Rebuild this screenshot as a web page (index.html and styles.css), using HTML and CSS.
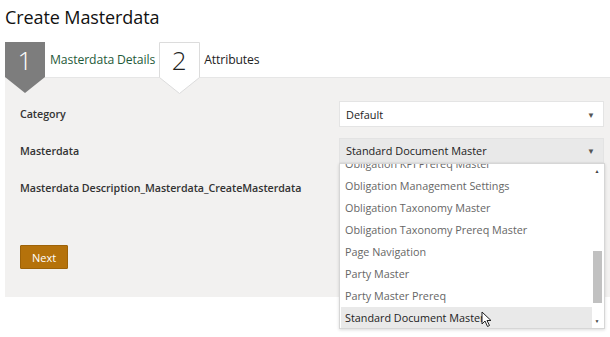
FILE: index.html
```html
<!DOCTYPE html>
<html>
<head>
<meta charset="utf-8">
<link rel="stylesheet" href="styles.css">
</head>
<body>
<div class="page">
  <h1 class="title">Create Masterdata</h1>
  <div class="steps">
    <div class="step">
      <div class="marker marker-active">
        <svg class="shape" width="40" height="51" viewBox="0 0 40 51"><polygon points="0,0 40,0 40,35 20,51 0,35" fill="#7d7d7d"/></svg>
        <span class="num">1</span>
      </div>
      <span class="step-label active">Masterdata Details</span>
    </div>
    <div class="step">
      <div class="marker">
        <svg class="shape" width="41" height="52" viewBox="0 0 41 52"><polygon points="0.5,0.5 40.5,0.5 40.5,35.5 20.5,51.5 0.5,35.5" fill="#ffffff" stroke="#dcdcdc"/></svg>
        <span class="num dark">2</span>
      </div>
      <span class="step-label">Attributes</span>
    </div>
  </div>
  <div class="panel">
    <div class="form">
      <label class="lbl">Category</label>
      <div class="select"><span>Default</span><span class="arrow">&#9660;</span></div>
      <label class="lbl">Masterdata</label>
      <div class="select-wrap">
        <div class="select open"><span>Standard Document Master</span><span class="arrow">&#9660;</span></div>
        <div class="dropdown">
          <ul class="options">
            <li class="opt cut">Obligation KPI Prereq Master</li>
            <li class="opt">Obligation Management Settings</li>
            <li class="opt">Obligation Taxonomy Master</li>
            <li class="opt">Obligation Taxonomy Prereq Master</li>
            <li class="opt">Page Navigation</li>
            <li class="opt">Party Master</li>
            <li class="opt">Party Master Prereq</li>
            <li class="opt selected">Standard Document Master</li>
          </ul>
          <div class="scrollbar">
            <span class="sb-arrow">&#9650;</span>
            <div class="track"><div class="thumb"></div></div>
            <span class="sb-arrow">&#9660;</span>
          </div>
          <svg class="cursor" width="12" height="17" viewBox="0 0 12 17"><path d="M1,1 L1,13 L4,10 L6.5,15.5 L8.5,14.5 L6,9.5 L10,9.5 Z" fill="#fff" stroke="#222" stroke-width="1"/></svg>
        </div>
      </div>
      <label class="lbl">Masterdata Description_Masterdata_CreateMasterdata</label>
      <div></div>
    </div>
    <button class="btn">Next</button>
  </div>
</div>
</body>
</html>
```
FILE: styles.css
```css
* { box-sizing: border-box; }
html, body { margin: 0; padding: 0; background: #fff; }
body { font-family: "Open Sans", "Noto Sans", sans-serif; color: #222; width: 610px; height: 337px; overflow: hidden; }
.page { padding: 0 0 0 5px; }
.title { margin: 0; padding-top: 4px; height: 42px; font-size: 18px; font-weight: 400; color: #111; letter-spacing: -0.1px; line-height: 26px; }
.steps { display: flex; height: 35px; align-items: stretch; gap: 4px; }
.step { display: flex; align-items: center; }
.marker { position: relative; width: 40px; height: 35px; display: flex; align-items: center; justify-content: center; }
.marker .shape { position: absolute; left: 0; top: 0; z-index: 2; }
.num { position: relative; z-index: 3; font-size: 26px; font-weight: 300; color: #fff; line-height: 35px; margin-top: 2px; }
.num.dark { color: #222; }
.step-label { font-size: 12.2px; margin-left: 5px; color: #222; letter-spacing: -0.1px; }
.step-label.active { color: #1f5a3a; }
.panel { background: #f2f1f0; border-top: 1px solid #e6e6e6; padding: 23px 6px 28px 15px; }
.form { display: grid; grid-template-columns: 319px 265px; grid-auto-rows: 26px; row-gap: 11px; }
.lbl { font-size: 10.7px; font-weight: 600; color: #333; display: flex; align-items: center; letter-spacing: -0.05px; }
.select-wrap { position: relative; }
.select { height: 26px; background: #fff; border: 1px solid #e4e4e4; display: flex; align-items: center; justify-content: space-between; padding: 0 8px 0 6px; font-size: 10.9px; color: #222; }
.select.open { background: #e9e9e9; border-color: #e3e3e3; height: 25px; }
.arrow { font-size: 8px; color: #555; }
.dropdown { position: absolute; left: 0; top: 25px; width: 266px; height: 166px; background: #fff; border: 1px solid #d6d6d6; box-shadow: 0 1px 3px rgba(0,0,0,0.15); overflow: hidden; z-index: 10; display: flex; }
.options { list-style: none; margin: 0; padding: 0; flex: 1; margin-top: -11px; }
.opt { height: 22px; line-height: 22px; padding-left: 5px; font-size: 10.8px; color: #666; }
.opt.selected { background: #e9e9e9; color: #222; margin-left: 1px; padding-left: 4px; }
.scrollbar { width: 10px; margin: 1px 2px 1px 0; display: flex; flex-direction: column; align-items: center; }
.sb-arrow { font-size: 5px; color: #444; height: 12px; line-height: 12px; }
.track { flex: 1; width: 9px; position: relative; }
.thumb { position: absolute; left: 0; right: 0; top: 74px; height: 52px; background: #c1c1c1; }
.cursor { position: absolute; left: 141px; top: 147px; }
.btn { margin-top: 44px; width: 48px; height: 24px; background: #b5720b; border: 1px solid #9d6208; border-radius: 1px; color: #fff; font-family: "Open Sans", sans-serif; font-size: 11px; padding: 0; }
```
